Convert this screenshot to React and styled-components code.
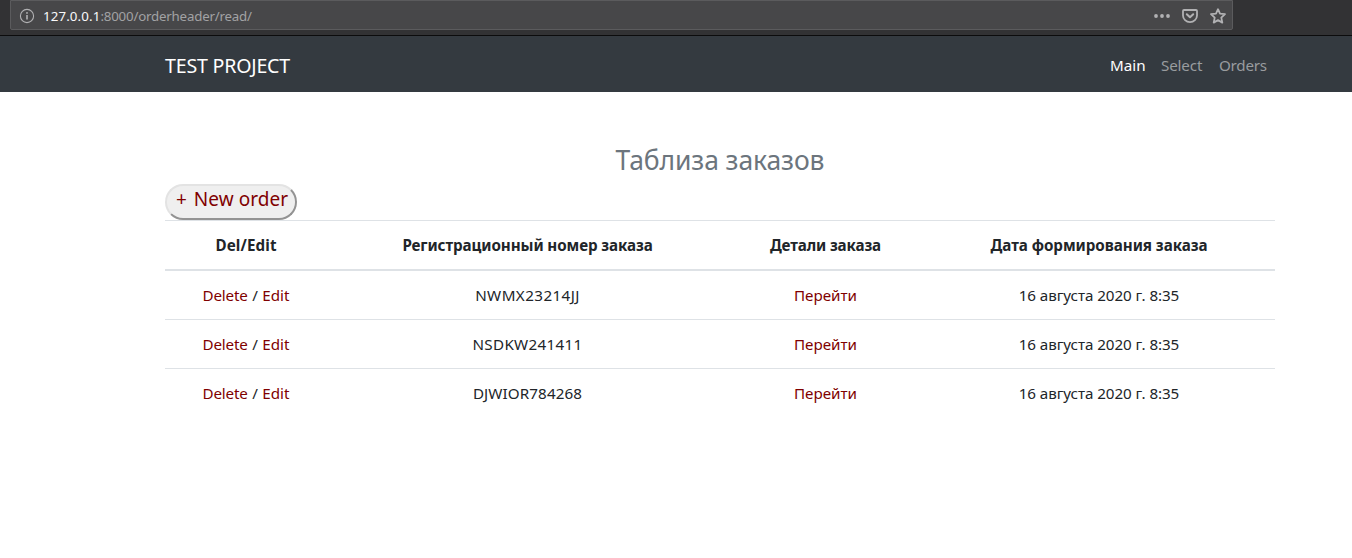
import React from "react";
import styled, { createGlobalStyle } from "styled-components";

const GlobalStyle = createGlobalStyle`
  *, *::before, *::after { box-sizing: border-box; }
  body {
    margin: 0;
    background: #fff;
    color: #212529;
    font: 400 15.2px/24px "Segoe UI", "Noto Sans", sans-serif;
  }
`;

const Tracked = styled.span`
  letter-spacing: ${(p) => p.$track || 0}px;
`;

const BrowserBar = styled.div`
  display: flex;
  height: 36px;
  padding-left: 10px;
  background: #323234;
  border-bottom: 1px solid #0c0c0d;
`;

const AddressField = styled.div`
  display: flex;
  align-items: center;
  width: 1223px;
  height: 30px;
  padding: 1px 6px 0 8px;
  background: #474749;
  border: 1px solid #5b5b5d;
  border-radius: 0 0 2px 2px;
`;

const Address = styled.div`
  flex: 1;
  margin-left: 8px;
  padding-top: 1px;
  color: #a2a2a4;
  font-size: 13.3px;
  line-height: 20px;
`;

const Host = styled(Tracked)`
  color: #f9f9fa;
`;

const FieldActions = styled.div`
  display: flex;
  align-items: center;
  gap: 12px;
`;

const Navbar = styled.nav`
  height: 56px;
  padding-top: 3px;
  background: #343a40;
`;

const Container = styled.div`
  width: 1110px;
  margin-left: 165px;
`;

const NavInner = styled(Container)`
  display: flex;
  align-items: center;
  justify-content: space-between;
  height: 53px;
`;

const Brand = styled.a`
  color: #fff;
  font-size: 19.6px;
  line-height: 30px;
  letter-spacing: -0.2px;
`;

const NavLinks = styled.div`
  display: flex;
  padding: 0 8px 2px 0;
  gap: 16px;
`;

const NavLink = styled.a`
  width: ${(p) => p.$width}px;
  white-space: nowrap;
  color: ${(p) => (p.$active ? "#fff" : "#999c9f")};
  letter-spacing: ${(p) => p.$track}px;
`;

const Title = styled.h3`
  margin: 0 0 7px;
  color: #6c757d;
  font-size: 26.5px;
  font-weight: 400;
  line-height: 33px;
  letter-spacing: -0.1px;
  text-align: center;
`;

const Content = styled(Container)`
  padding-top: 52px;
`;

const NewOrderButton = styled.button`
  display: block;
  width: 132px;
  height: 36px;
  padding: 0 0 5px 2px;
  background: #efefef;
  border: 2px solid;
  border-color: #e3e3e3 #939393 #939393 #e3e3e3;
  border-radius: 20px;
  color: #800000;
  font: inherit;
  font-size: 19px;
  line-height: 25px;
  letter-spacing: 0.05px;
  white-space: nowrap;
`;

const Plus = styled.span`
  margin-right: 2px;
`;

const Table = styled.table`
  width: 100%;
  table-layout: fixed;
  border-collapse: separate;
  border-spacing: 0;
  text-align: center;
`;

const HeadCell = styled.th`
  width: ${(p) => p.$width}px;
  padding: 12px 0;
  border-top: 1px solid #dee2e6;
  border-bottom: 2px solid #dee2e6;
  font-weight: 700;
  white-space: nowrap;
`;

const Cell = styled.td`
  padding: 12px 0;
  tr + tr > & {
    border-top: 1px solid #dee2e6;
  }
`;

const Link = styled.a`
  color: #800000;
  letter-spacing: ${(p) => p.$track || 0}px;
`;

const Slash = styled.span`
  margin: 0 0.5px;
`;

const columns = [
  { label: "Del/Edit", width: 162, track: 0.12 },
  { label: "Регистрационный номер заказа", width: 401, track: -0.1 },
  { label: "Детали заказа", width: 195, track: -0.13 },
  { label: "Дата формирования заказа", width: 352, track: -0.05 },
];

const orders = [
  { number: "NWMX23214JJ", track: 0.42 },
  { number: "NSDKW241411", track: 0.3 },
  { number: "DJWIOR784268", track: 0.1 },
];

const InfoIcon = () => (
  <svg width="16" height="16" viewBox="0 0 16 16" fill="none" stroke="#b1b1b3">
    <circle cx="8" cy="8" r="6.6" strokeWidth="1.1" />
    <path d="M8 7v4.4" strokeWidth="1.6" />
    <circle cx="8" cy="4.9" r="0.95" fill="#b1b1b3" stroke="none" />
  </svg>
);

const DotsIcon = () => (
  <svg width="16" height="16" viewBox="0 0 16 16" fill="#b1b1b3">
    <circle cx="2" cy="8" r="1.9" />
    <circle cx="8" cy="8" r="1.9" />
    <circle cx="14" cy="8" r="1.9" />
  </svg>
);

const PocketIcon = () => (
  <svg width="16" height="16" viewBox="0 0 16 16" fill="none" stroke="#b1b1b3" strokeWidth="2" strokeLinecap="round" strokeLinejoin="round">
    <path d="M2 2h12a1 1 0 0 1 1 1v4.5a7 6.6 0 0 1-14 0V3a1 1 0 0 1 1-1z" strokeWidth="1.8" />
    <path d="M4.8 6.2 8 9.3l3.2-3.1" />
  </svg>
);

const StarIcon = () => (
  <svg width="16" height="16" viewBox="0 0 16 16" fill="none" stroke="#b1b1b3" strokeWidth="1.8" strokeLinejoin="round">
    <path d="M8 1.2 10 5.7l5 .5-3.7 3.4 1 5L8 12.1l-4.3 2.5 1-5L1 6.2l5-.5z" />
  </svg>
);

export default function App() {
  return (
    <>
      <GlobalStyle />
      <BrowserBar>
        <AddressField>
          <InfoIcon />
          <Address>
            <Host $track={0.12}>127.0.0.1</Host>
            <Tracked $track={-0.2}>:8000/orderheader/read/</Tracked>
          </Address>
          <FieldActions>
            <DotsIcon />
            <PocketIcon />
            <StarIcon />
          </FieldActions>
        </AddressField>
      </BrowserBar>
      <Navbar>
        <NavInner>
          <Brand>TEST PROJECT</Brand>
          <NavLinks>
            <NavLink $active $width={35} $track={0}>Main</NavLink>
            <NavLink $width={42} $track={-0.15}>Select</NavLink>
            <NavLink $width={48} $track={-0.25}>Orders</NavLink>
          </NavLinks>
        </NavInner>
      </Navbar>
      <Content>
        <Title>Таблиза заказов</Title>
        <NewOrderButton>
          <Plus>+</Plus> New order
        </NewOrderButton>
        <Table>
          <thead>
            <tr>
              {columns.map((c) => (
                <HeadCell key={c.label} $width={c.width}>
                  <Tracked $track={c.track}>{c.label}</Tracked>
                </HeadCell>
              ))}
            </tr>
          </thead>
          <tbody>
            {orders.map((o) => (
              <tr key={o.number}>
                <Cell>
                  <Link $track={-0.15}>Delete</Link>
                  <Slash> / </Slash>
                  <Link>Edit</Link>
                </Cell>
                <Cell>
                  <Tracked $track={o.track}>{o.number}</Tracked>
                </Cell>
                <Cell>
                  <Link>Перейти</Link>
                </Cell>
                <Cell>
                  <Tracked $track={-0.07}>16 августа 2020 г. 8:35</Tracked>
                </Cell>
              </tr>
            ))}
          </tbody>
        </Table>
      </Content>
    </>
  );
}
